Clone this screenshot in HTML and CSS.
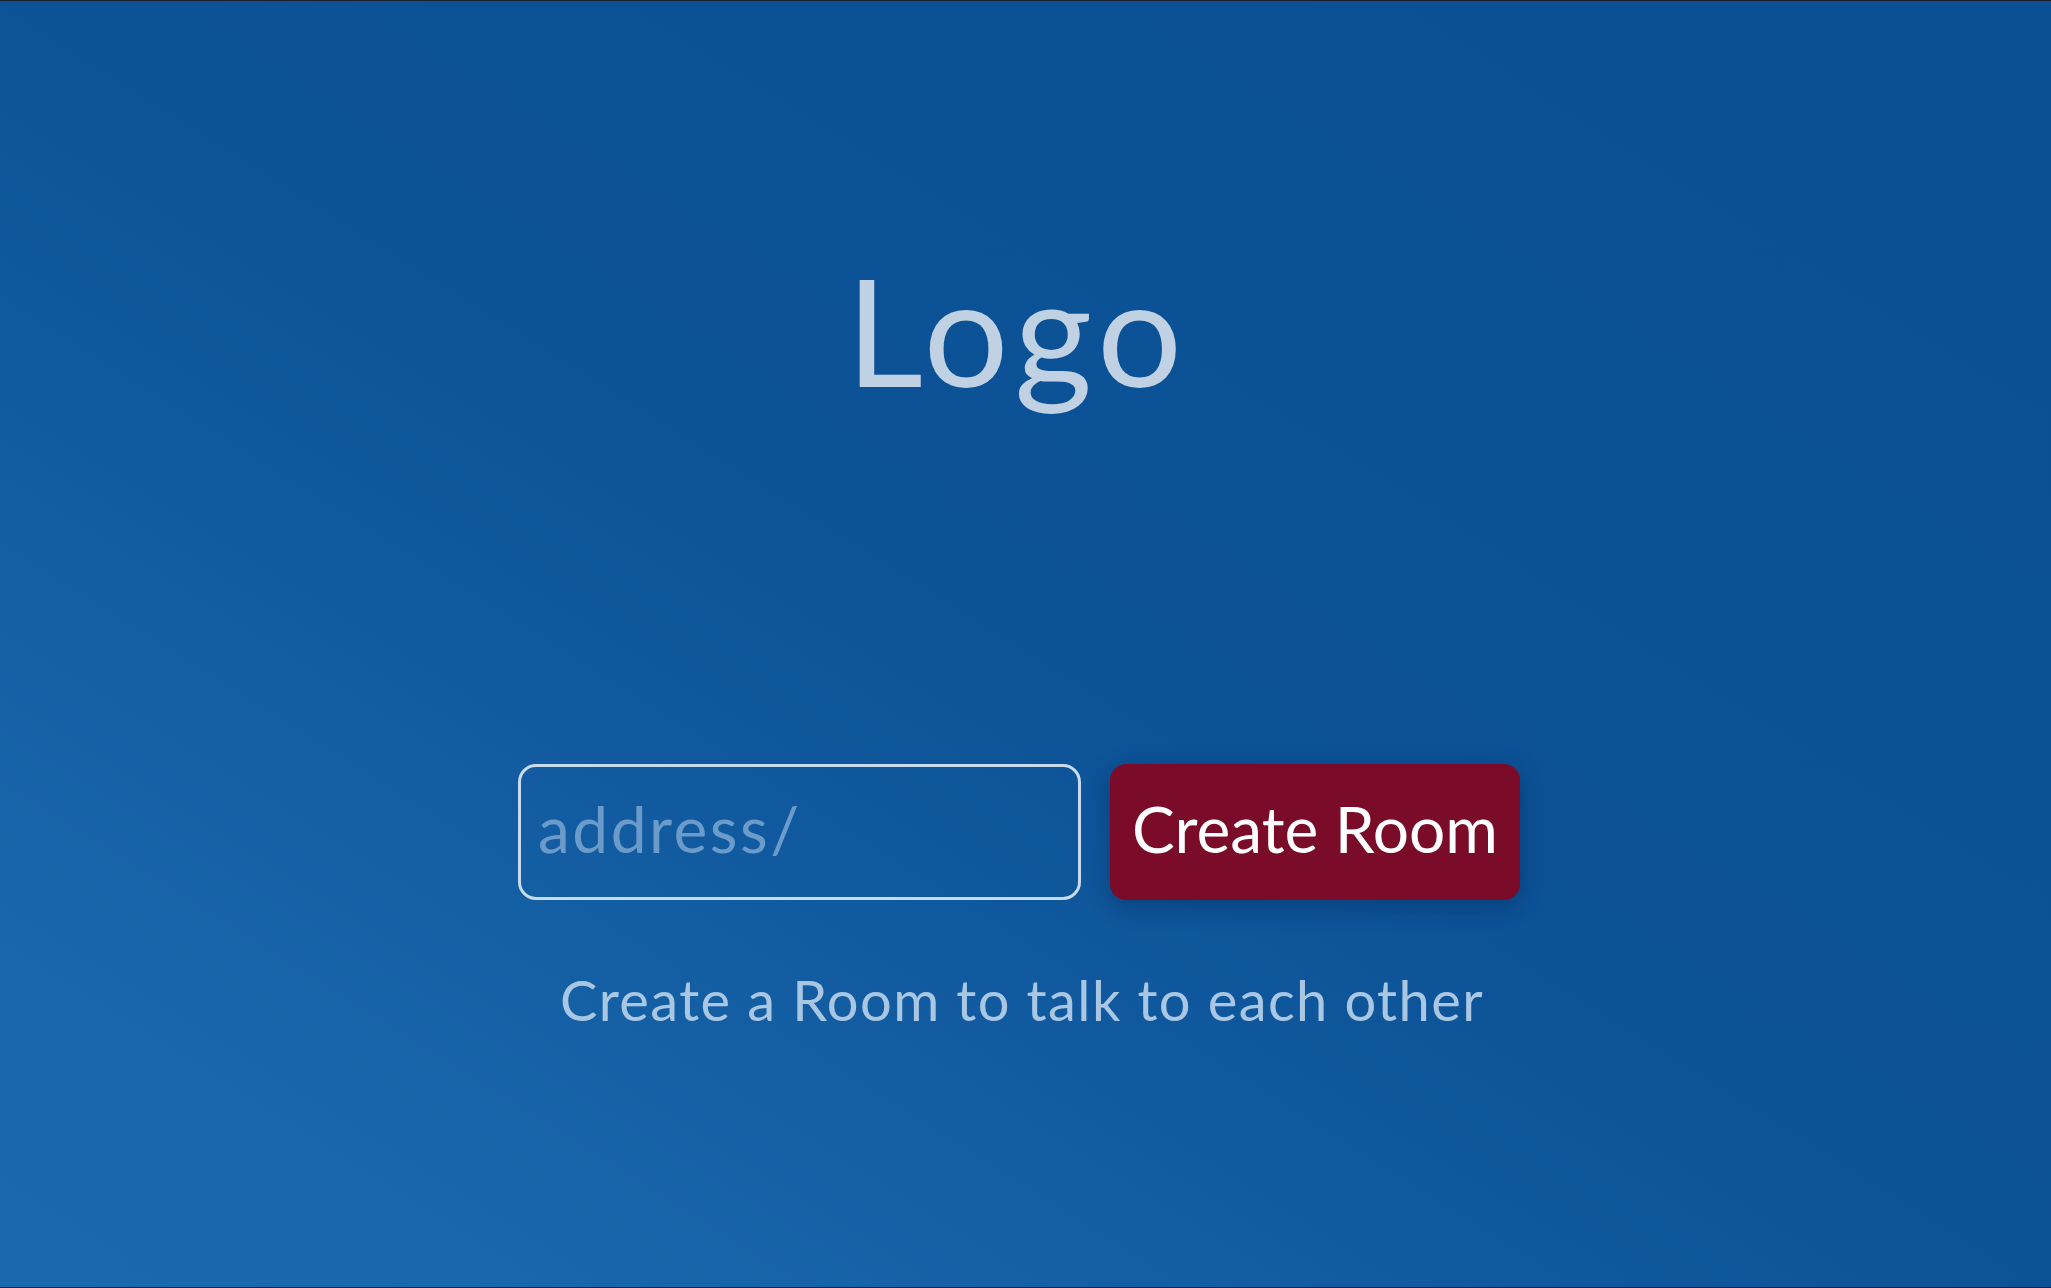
FILE: index.html
```html
<!DOCTYPE html>
<html lang="en">
<head>
<meta charset="utf-8">
<title>Create Room</title>
<link rel="stylesheet" href="styles.css">
</head>
<body>
<main class="page">
  <h1 class="logo">Logo</h1>
  <form class="room-form" onsubmit="return false">
    <input class="address" type="text" placeholder="address/">
    <button class="create" type="submit">Create Room</button>
  </form>
  <p class="tagline">Create a Room to talk to each other</p>
</main>
</body>
</html>
```
FILE: styles.css
```css
html, body {
  margin: 0;
  padding: 0;
  height: 100%;
}
body {
  box-sizing: border-box;
  border-top: 1px solid #17202b;
  border-bottom: 1px solid #17202b;
  background: linear-gradient(to top right, #1b68ae 0%, #1a67ad 12%, #0c5297 50%, #0b5094 100%);
  font-family: Lato, "Open Sans", sans-serif;
  overflow: hidden;
}
.page {
  display: flex;
  flex-direction: column;
  align-items: center;
  padding-right: 13px;
}
.logo {
  margin: 253px 0 0;
  padding-right: 4px;
  font-size: 150px;
  line-height: 150px;
  font-weight: 400;
  letter-spacing: 6px;
  color: #bfd1e3;
}
.room-form {
  display: flex;
  gap: 29px;
  margin-top: 360px;
}
.address {
  box-sizing: border-box;
  width: 563px;
  height: 136px;
  padding: 0 0 8px 17px;
  border: 3px solid #c8daee;
  border-radius: 18px;
  background: transparent;
  font-family: inherit;
  font-size: 64px;
  letter-spacing: 2.5px;
  color: #ffffff;
  outline: none;
}
.address::placeholder {
  color: #6a9bca;
}
.create {
  box-sizing: border-box;
  width: 410px;
  height: 136px;
  padding: 0 0 8px;
  border: none;
  border-radius: 16px;
  background: #7a0c29;
  color: #ffffff;
  font-family: inherit;
  font-size: 64px;
  box-shadow: 0 6px 22px rgba(5, 25, 60, 0.35);
  cursor: pointer;
}
.tagline {
  margin: 72px 0 0;
  padding-left: 6px;
  font-size: 56px;
  line-height: 56px;
  letter-spacing: 1.4px;
  color: #a9c7e3;
}
```
